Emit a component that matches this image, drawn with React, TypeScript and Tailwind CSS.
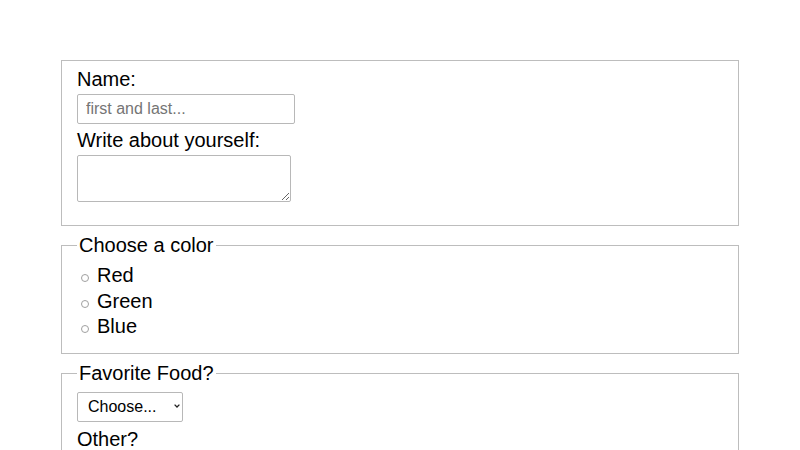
import React from "react";

function Radio({ label }: { label: string }) {
  return (
    <label className="flex items-start h-[25.5px] leading-[25.5px]">
      <span className="mt-[11px] ml-[4px] mr-[8px] inline-block w-[8px] h-[8px] rounded-full border border-[#a0a0a0] bg-white shrink-0" />
      <span>{label}</span>
    </label>
  );
}

export default function App() {
  return (
    <div className="h-[450px] overflow-hidden bg-white pt-[60px] font-['Liberation_Sans',Arial,sans-serif] text-[20px] leading-[23px] text-black">
      <form className="mx-auto w-[678px]">
        <fieldset className="border border-[#bdbdbd] px-[15px] pt-[7px] pb-[23px]">
          <label className="block" htmlFor="name">Name:</label>
          <input
            id="name"
            type="text"
            placeholder="first and last..."
            className="mt-[3px] block w-[218px] h-[30px] rounded-[2px] border border-[#b8b8b8] px-[8px] text-[16px] leading-[18px] placeholder:text-[#757575] outline-none"
          />
          <label className="mt-[5px] block" htmlFor="about">Write about yourself:</label>
          <textarea
            id="about"
            className="mt-[3px] block w-[214px] h-[47px] rounded-[2px] border border-[#b8b8b8] px-[2px] py-[1px] text-[16px] outline-none"
          />
        </fieldset>

        <fieldset className="mt-[8px] border border-[#bdbdbd] px-[15px] pt-[6px] pb-[13px]">
          <legend className="px-[2px]">Choose a color</legend>
          <Radio label="Red" />
          <Radio label="Green" />
          <Radio label="Blue" />
        </fieldset>

        <fieldset className="mt-[8px] border border-[#bdbdbd] px-[15px] pt-[7px] pb-[13px]">
          <legend className="px-[2px]">Favorite Food?</legend>
          <div className="relative w-[106px] h-[30px]">
            <select
              defaultValue=""
              className="appearance-none block w-[106px] h-[30px] rounded-[2px] border border-[#b8b8b8] bg-white pl-[10px] pr-[20px] text-[16px] text-black outline-none"
            >
              <option value="" disabled>
                Choose...
              </option>
              <option value="pizza">Pizza</option>
              <option value="pasta">Pasta</option>
            </select>
            <svg
              className="pointer-events-none absolute left-[97px] top-[12px]"
              width="6"
              height="4"
              viewBox="0 0 6 4"
            >
              <path d="M0.6 0.6 L3 3 L5.4 0.6" fill="none" stroke="#222" strokeWidth="1.3" />
            </svg>
          </div>
          <label className="mt-[6px] block">Other?</label>
          <input
            type="text"
            className="mt-[3px] block w-[218px] h-[30px] rounded-[2px] border border-[#b8b8b8] px-[8px] text-[16px] outline-none"
          />
        </fieldset>
      </form>
    </div>
  );
}
